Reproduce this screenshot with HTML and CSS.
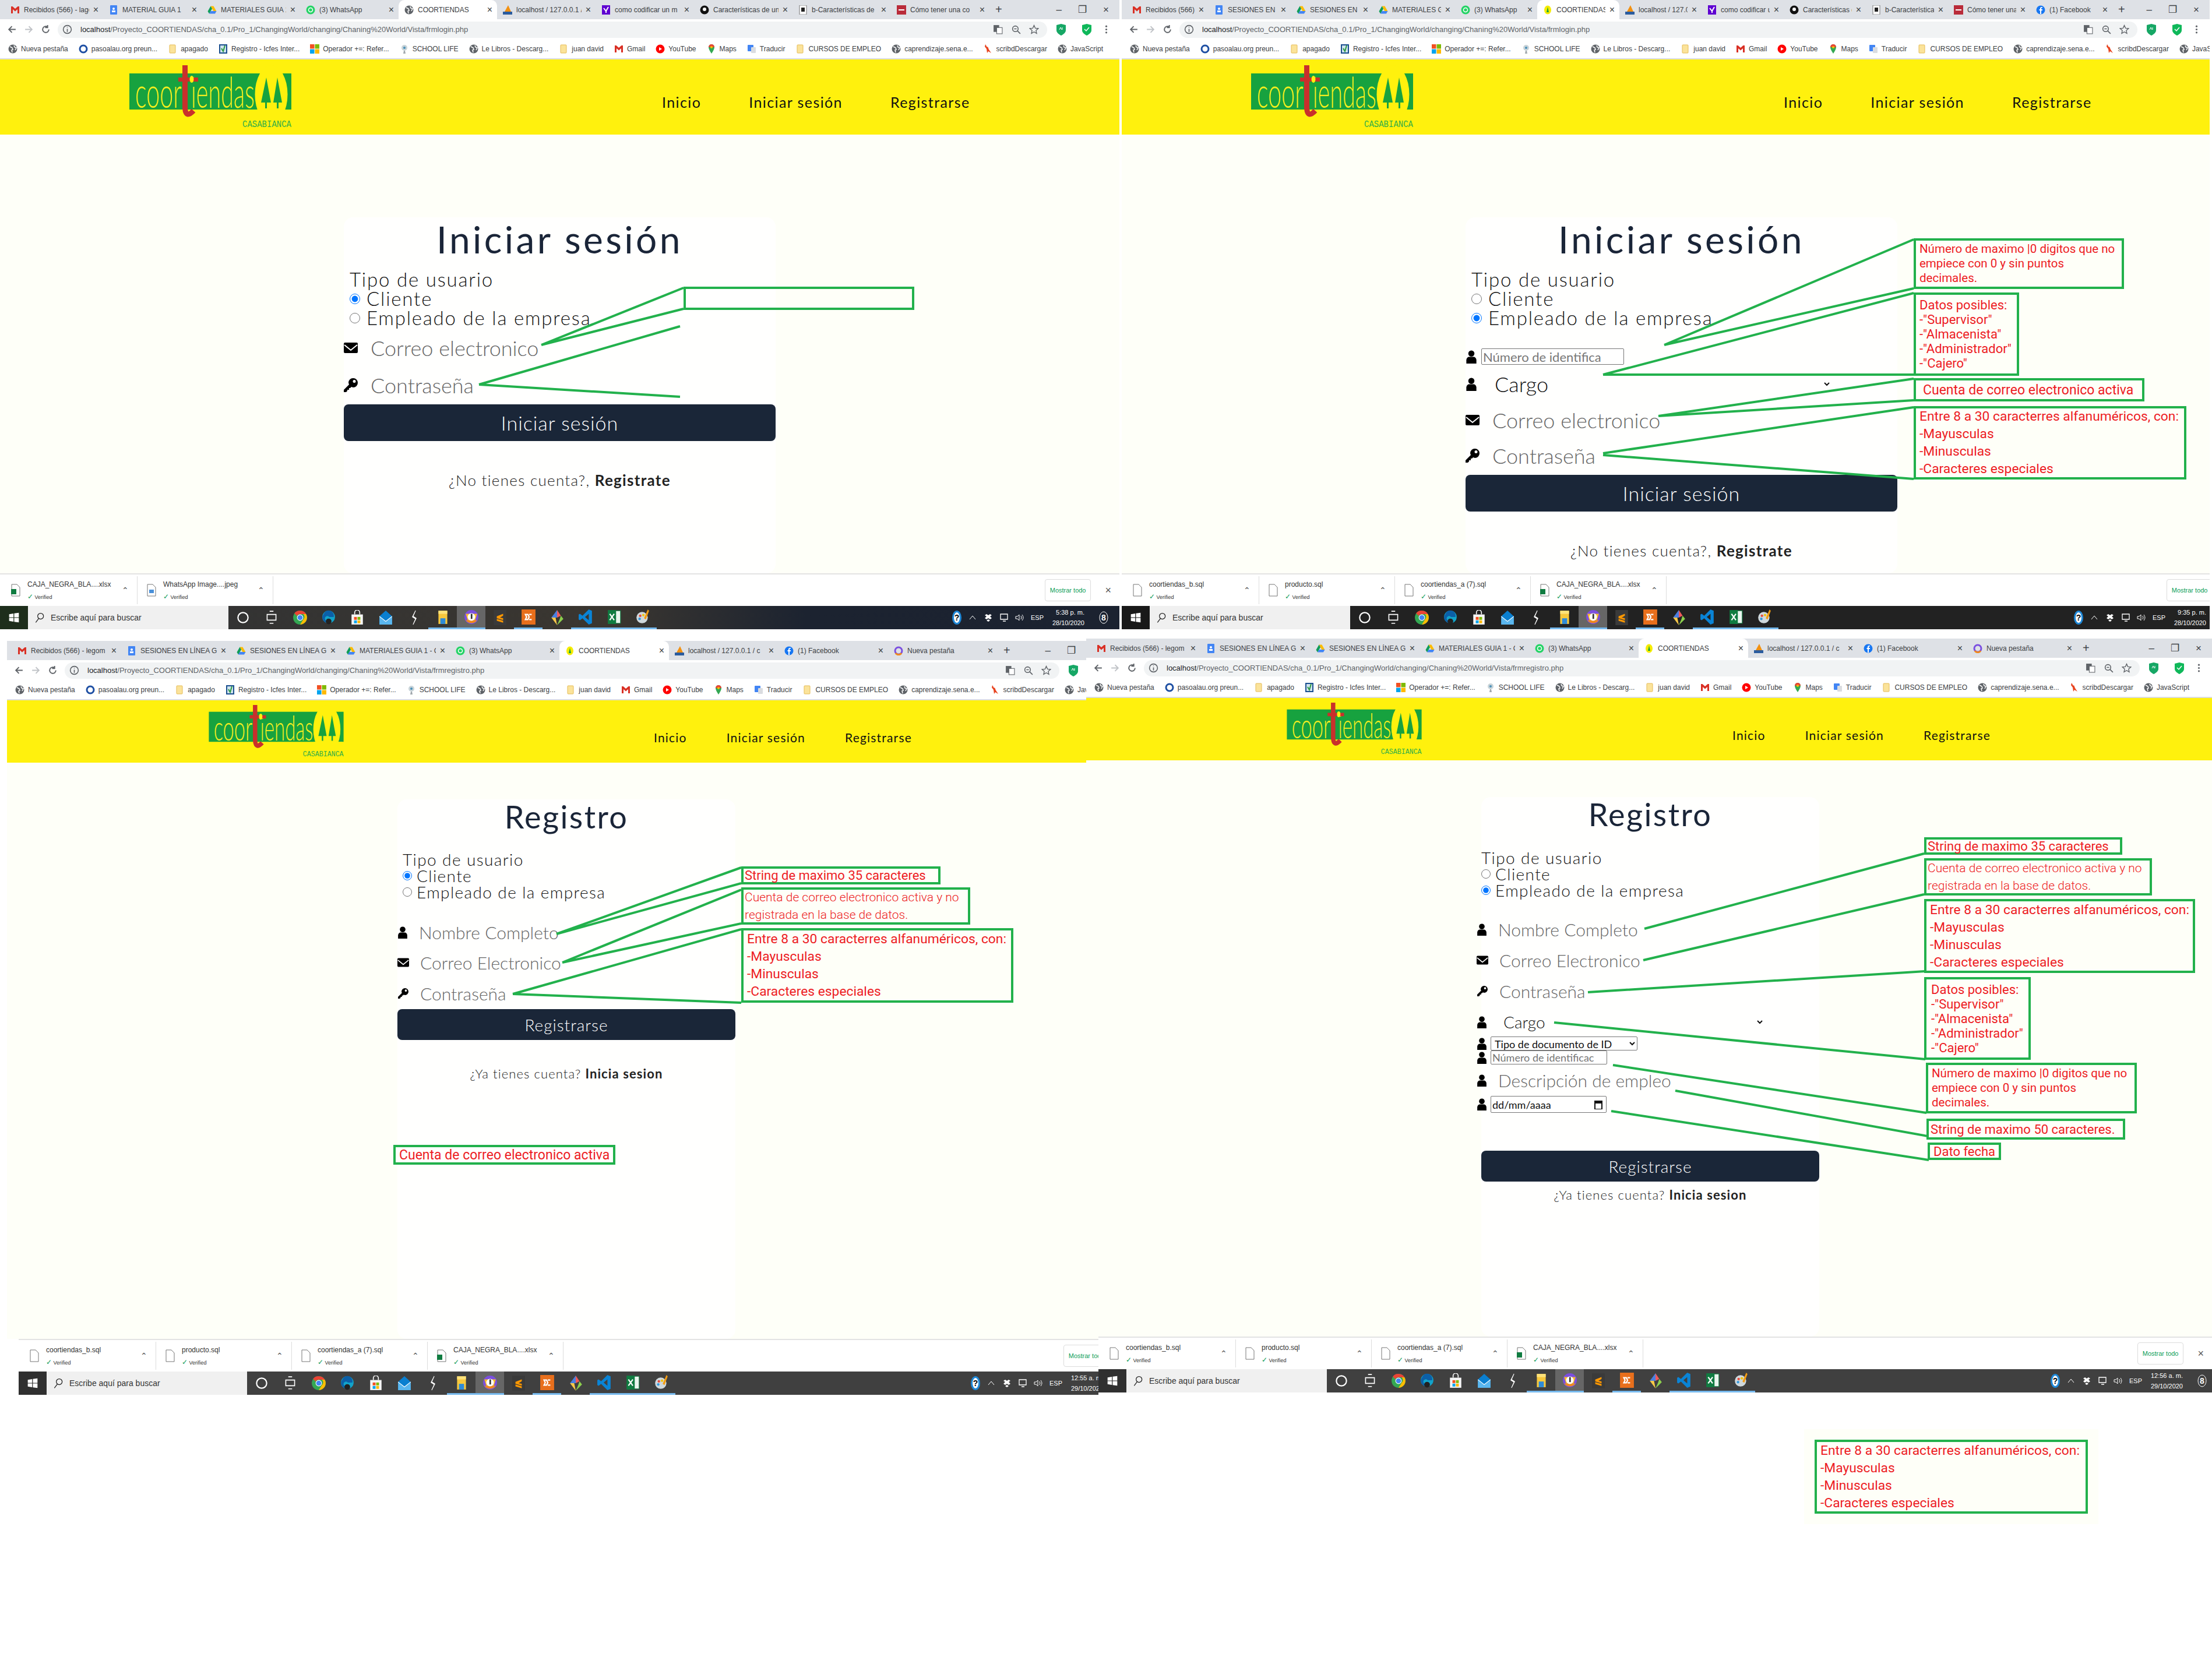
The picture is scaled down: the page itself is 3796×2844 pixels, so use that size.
FILE: index.html
```html
<!DOCTYPE html>
<html lang="es">
<head>
    <meta charset="UTF-8">
    <title>COORTIENDAS - pantallas de login y registro</title>
    <link rel="stylesheet" href="styles.css">
</head>
<body>
<svg class="sprites" xmlns="http://www.w3.org/2000/svg">
    <symbol id="logo" viewBox="0 0 278 107">
        <rect y="14" width="278" height="62" fill="#17a23f"/>
        <ellipse cx="243.5" cy="50" rx="28" ry="50" fill="#fff10d"/>
        <rect x="216" y="76" width="60" height="26" fill="#fff10d"/>
        <path d="M235 21l-9 43h7v10h3V64h7zM254 21l-7 43h6v10h3V64h6z" fill="#17a23f"/>
        <text class="logo-word" x="10" y="73" textLength="80" lengthAdjust="spacingAndGlyphs">coor</text>
        <text class="logo-word" x="106" y="73" textLength="109" lengthAdjust="spacingAndGlyphs">iendas</text>
        <path d="M95.5 0V74Q97 92 110 78" fill="none" stroke="#c9302c" stroke-width="9"/>
        <rect x="84" y="21" width="34" height="7" fill="#c9302c"/>
        <ellipse cx="107" cy="24" rx="3.5" ry="6" fill="#fff10d"/>
        <text class="logo-place" x="194" y="106" textLength="84" lengthAdjust="spacingAndGlyphs">CASABIANCA</text>
    </symbol>

    <symbol id="i-user" viewBox="0 0 20 24"><circle cx="10" cy="6" r="5.5"/><path d="M1 24v-6c0-4 3-6 5-6h8c2 0 5 2 5 6v6z"/></symbol>
    <symbol id="i-mail" viewBox="0 0 24 18"><path d="M2 0h20q2 0 2 2v14q0 2-2 2H2q-2 0-2-2V2q0-2 2-2z"/><path d="M1 4l11 9 11-9" fill="none" stroke="#fff" stroke-width="2"/></symbol>
    <symbol id="i-key" viewBox="0 0 24 24"><path d="M16 0a8 8 0 0 1 0 16l-3-1-2 2h-2v3H6v2l-2 2H0v-4l9-9-1-3a8 8 0 0 1 8-8zm2 3a2.500 2.500 0 1 0 0 5 2.500 2.500 0 0 0 0-5z"/></symbol>
    <symbol id="i-cal" viewBox="0 0 14 16"><path d="M1 2h12v14H1z" fill="none" stroke="#111" stroke-width="2"/><path d="M1 2h12v4H1z" fill="#111"/></symbol>

    <symbol id="f-gmail" viewBox="0 0 16 16"><path d="M1 2h2.500L8 6l4.500-4H15v12h-3V7L8 10.500 4 7v7H1z" fill="#d93025"/></symbol>
    <symbol id="f-docs" viewBox="0 0 16 16"><rect x="2" width="12" height="16" rx="1" fill="#4285f4"/><circle cx="8" cy="6" r="2" fill="#fff"/><rect x="5" y="9" width="6" height="3" fill="#fff"/></symbol>
    <symbol id="f-drive" viewBox="0 0 16 16"><path d="M5.500 1.500h5l5 9h-5z" fill="#fbbc04"/><path d="M5.500 1.500L.5 10.500 3 14.500 8 6z" fill="#0f9d58"/><path d="M3 14.500l2.500-4.500h10L13 14.500z" fill="#4285f4"/></symbol>
    <symbol id="f-wa" viewBox="0 0 16 16"><circle cx="8" cy="8" r="7.500" fill="#25d366"/><circle cx="8" cy="8" r="3.500" fill="none" stroke="#fff" stroke-width="1.500"/></symbol>
    <symbol id="f-globe" viewBox="0 0 16 16"><circle cx="8" cy="8" r="7.500" fill="#5f6368"/><path d="M3 4l4 2 1 3-2 1 1 4M10 2l1 3 3 1-2 4" fill="none" stroke="#fff" stroke-width="1.500"/></symbol>
    <symbol id="f-coor" viewBox="0 0 16 16"><ellipse cx="8" cy="8" rx="6" ry="7.500" fill="#f6ec00"/><path d="M8 3l2 9H6z" fill="#17a23f"/></symbol>
    <symbol id="f-pma" viewBox="0 0 16 16"><path d="M9 0l5 11H3z" fill="#f29111"/><rect y="11" width="16" height="5" fill="#2b5c9e"/></symbol>
    <symbol id="f-yahoo" viewBox="0 0 16 16"><rect x="1" width="14" height="16" fill="#5f01d1"/><path d="M4 5l4 5 4-7M8 10v3" fill="none" stroke="#fff" stroke-width="2"/></symbol>
    <symbol id="f-dark" viewBox="0 0 16 16"><circle cx="8" cy="8" r="7.500" fill="#111"/><circle cx="8" cy="7" r="3" fill="#fff"/></symbol>
    <symbol id="f-paper" viewBox="0 0 16 16"><rect x="2" width="12" height="16" fill="#fff" stroke="#777"/><rect x="5" y="4" width="6" height="7" fill="#222"/></symbol>
    <symbol id="f-red" viewBox="0 0 16 16"><rect width="16" height="16" fill="#b92b3a"/><rect x="3" y="7" width="10" height="2" fill="#fff"/></symbol>
    <symbol id="f-fb" viewBox="0 0 16 16"><circle cx="8" cy="8" r="7.500" fill="#1877f2"/><path d="M9 15V9h2V7H9V5.500Q9 4.500 10 4.500h1V3H9.500Q7 3 7 5.500V7H5.500v2H7v6z" fill="#fff"/></symbol>
    <symbol id="f-new" viewBox="0 0 16 16"><circle cx="8" cy="8" r="6" fill="none" stroke="#7b4fe0" stroke-width="3"/><path d="M3 12a6 6 0 0 0 10 0" fill="none" stroke="#f08a1d" stroke-width="3"/></symbol>
    <symbol id="f-pas" viewBox="0 0 16 16"><circle cx="8" cy="8" r="6" fill="#fff" stroke="#1e4fa3" stroke-width="3"/></symbol>
    <symbol id="f-folder" viewBox="0 0 16 16"><rect x="3" y="1" width="10" height="14" rx="1" fill="#fbe39a" stroke="#e5bb57"/></symbol>
    <symbol id="f-reg" viewBox="0 0 16 16"><rect x="2" y="1" width="12" height="14" fill="#cfe3ee" stroke="#1b4f8f" stroke-width="2"/><path d="M5 7l3 5 3-10" fill="none" stroke="#2c9a43" stroke-width="2"/></symbol>
    <symbol id="f-ms" viewBox="0 0 16 16"><rect width="7.500" height="7.500" fill="#f25022"/><rect x="8.500" width="7.500" height="7.500" fill="#7fba00"/><rect y="8.500" width="7.500" height="7.500" fill="#00a4ef"/><rect x="8.500" y="8.500" width="7.500" height="7.500" fill="#ffb900"/></symbol>
    <symbol id="f-school" viewBox="0 0 16 16"><circle cx="8" cy="6" r="5" fill="#c8d3d8"/><circle cx="8" cy="6" r="2" fill="#4a8fb8"/><path d="M7 11h2l1 5H6z" fill="#a0a8ad"/></symbol>
    <symbol id="f-yt" viewBox="0 0 16 16"><circle cx="8" cy="8" r="7.500" fill="#f00"/><path d="M6 5l5 3-5 3z" fill="#fff"/></symbol>
    <symbol id="f-maps" viewBox="0 0 16 16"><path d="M8 0a5 5 0 0 1 5 5c0 4-5 11-5 11S3 9 3 5a5 5 0 0 1 5-5z" fill="#34a853"/><path d="M8 0a5 5 0 0 1 5 5H3a5 5 0 0 1 5-5z" fill="#ea4335"/><circle cx="8" cy="5" r="2" fill="#fbbc04"/></symbol>
    <symbol id="f-trans" viewBox="0 0 16 16"><rect x="1" y="1" width="10" height="11" rx="1" fill="#4285f4"/><rect x="7" y="5" width="8" height="10" rx="1" fill="#dadce0"/></symbol>
    <symbol id="f-scribd" viewBox="0 0 16 16"><path d="M3 0l3 5 1-1 2 5 4 6-5-3-2 3-1-7-3-4z" fill="#e8431f"/></symbol>

    <symbol id="t-back" viewBox="0 0 16 16"><path d="M14 8H3M8 3L3 8l5 5" fill="none" stroke="#5f6368" stroke-width="1.800"/></symbol>
    <symbol id="t-next" viewBox="0 0 16 16"><path d="M2 8h11M8 3l5 5-5 5" fill="none" stroke="#c0c3c7" stroke-width="1.800"/></symbol>
    <symbol id="t-load" viewBox="0 0 16 16"><path d="M13 8a5 5 0 1 1-2-4M11 1v4H7" fill="none" stroke="#5f6368" stroke-width="1.800"/></symbol>
    <symbol id="t-info" viewBox="0 0 16 16"><circle cx="8" cy="8" r="6.500" fill="none" stroke="#5f6368" stroke-width="1.500"/><path d="M8 4v1M8 7v5" stroke="#5f6368" stroke-width="1.500"/></symbol>
    <symbol id="t-trad" viewBox="0 0 16 16"><rect x="1" y="1" width="9" height="11" fill="#5f6368"/><rect x="6" y="5" width="9" height="10" fill="#fff" stroke="#5f6368"/></symbol>
    <symbol id="t-zoom" viewBox="0 0 16 16"><circle cx="7" cy="7" r="4.500" fill="none" stroke="#5f6368" stroke-width="1.500"/><path d="M10 10l5 5M5 7h4" stroke="#5f6368" stroke-width="1.500"/></symbol>
    <symbol id="t-star" viewBox="0 0 16 16"><path d="M8 1.500l2 4.500 4.800.5-3.600 3.200 1 4.800L8 12l-4.200 2.500 1-4.800L1.200 6.500 6 6z" fill="none" stroke="#5f6368" stroke-width="1.300"/></symbol>
    <symbol id="t-ab" viewBox="0 0 16 20"><path d="M8 0l8 2v9c0 4-4 7-8 9-4-2-8-5-8-9V2z" fill="#16a765"/><path d="M5 10l2-4 2 4M10 6v4" fill="none" stroke="#fff"/></symbol>
    <symbol id="t-shield" viewBox="0 0 16 20"><path d="M8 0l8 2v9c0 4-4 7-8 9-4-2-8-5-8-9V2z" fill="#0fb85a"/><path d="M4 9l3 3 5-6" fill="none" stroke="#fff" stroke-width="1.500"/></symbol>
    <symbol id="t-dots" viewBox="0 0 16 16"><circle cx="8" cy="3" r="1.500" fill="#5f6368"/><circle cx="8" cy="8" r="1.500" fill="#5f6368"/><circle cx="8" cy="13" r="1.500" fill="#5f6368"/></symbol>

    <symbol id="d-doc" viewBox="0 0 16 22"><path d="M1 1h9l5 5v15H1z" fill="#fff" stroke="#777"/></symbol>
    <symbol id="d-xls" viewBox="0 0 16 22"><path d="M1 1h9l5 5v15H1z" fill="#fff" stroke="#777"/><rect y="9" width="9" height="9" fill="#107c41"/></symbol>
    <symbol id="d-img" viewBox="0 0 16 22"><path d="M1 1h9l5 5v15H1z" fill="#fff" stroke="#777"/><rect x="4" y="10" width="8" height="6" fill="#4a90d9"/></symbol>

    <symbol id="b-win" viewBox="0 0 24 24"><path d="M2 5l9-1.500V11.500H2zM12.500 3.300L22 2v9.500h-9.500zM2 12.500h9v8L2 19zM12.500 12.500H22V22l-9.500-1.300z" fill="#fff"/></symbol>
    <symbol id="b-search" viewBox="0 0 24 24"><circle cx="14" cy="9" r="6" fill="none" stroke="#222" stroke-width="1.500"/><path d="M10 14l-6 8" stroke="#222" stroke-width="1.500"/></symbol>
    <symbol id="b-ring" viewBox="0 0 24 24"><circle cx="12" cy="12" r="8" fill="none" stroke="#fff" stroke-width="2"/></symbol>
    <symbol id="b-view" viewBox="0 0 24 24"><path d="M9 2h6M5 7h14v9H5zM9 21h6" fill="none" stroke="#fff" stroke-width="1.500"/></symbol>
    <symbol id="b-chrome" viewBox="0 0 24 24"><circle cx="12" cy="12" r="11" fill="#34a853"/><path d="M12 1a11 11 0 0 1 9.500 5.500H12a5.500 5.500 0 0 0-5 3L3 5a11 11 0 0 1 9-4z" fill="#ea4335"/><path d="M21.500 6.500A11 11 0 0 1 12 23l5-8a5.500 5.500 0 0 0 0-8.500z" fill="#fbbc04"/><circle cx="12" cy="12" r="4.500" fill="#4285f4" stroke="#fff"/></symbol>
    <symbol id="b-edge" viewBox="0 0 24 24"><circle cx="12" cy="11" r="10" fill="#12a3c9"/><path d="M4 7a8 8 0 0 1 16 4h-7a4 4 0 0 0-7 2c0 4 5 8 10 7A10 10 0 0 1 2 12q0-3 2-5z" fill="#0b5fa8"/><circle cx="12" cy="18" r="4.500" fill="#222"/></symbol>
    <symbol id="b-store" viewBox="0 0 24 24"><path d="M3 7h18v16H3z" fill="#f5f5f5"/><path d="M8 7V4a4 4 0 0 1 8 0v3" fill="none" stroke="#fff" stroke-width="1.500"/><rect x="7" y="11" width="4.500" height="4.500" fill="#f25022"/><rect x="12.500" y="11" width="4.500" height="4.500" fill="#7fba00"/><rect x="7" y="16.500" width="4.500" height="4.500" fill="#00a4ef"/><rect x="12.500" y="16.500" width="4.500" height="4.500" fill="#ffb900"/></symbol>
    <symbol id="b-mail" viewBox="0 0 24 24"><path d="M12 1l10 9v13H2V10z" fill="#0a7fd0"/><path d="M2 10l10 8 10-8v13H2z" fill="#5ab6ee"/><path d="M2 10l10 8 10-8" fill="none" stroke="#fff"/></symbol>
    <symbol id="b-bolt" viewBox="0 0 24 24"><path d="M14 1L9 11l5 3-4 9 5-10-5-3z" fill="#fff" stroke="#fff"/></symbol>
    <symbol id="b-folder" viewBox="0 0 24 24"><path d="M5 2h14v21H5z" fill="#f7c83d"/><rect x="5" y="2" width="14" height="5" fill="#fde27a"/><rect x="8" y="14" width="8" height="9" fill="#2e8bd8"/></symbol>
    <symbol id="b-canary" viewBox="0 0 24 24"><circle cx="12" cy="12" r="11" fill="#7b4fe0"/><path d="M3 17a11 11 0 0 0 18 0z" fill="#f08a1d"/><path d="M3 7h18l-3 10H6z" fill="#fbbf24"/><circle cx="12" cy="12" r="6" fill="#fff"/><rect x="11" y="7" width="2.500" height="8" fill="#333"/></symbol>
    <symbol id="b-sublime" viewBox="0 0 24 24"><rect x="2" width="20" height="24" fill="#3a3a3a"/><path d="M17 6L7 10v3l10 3v-3l-5-1 5-3zM7 14v3l10 3v-3z" fill="#ff9800"/></symbol>
    <symbol id="b-xampp" viewBox="0 0 24 24"><rect x="1" width="22" height="24" fill="#e86f1c"/><path d="M7 8h4l2 4-2 4H7l2-4zM17 8h-4M17 16h-4" fill="none" stroke="#fff" stroke-width="2"/></symbol>
    <symbol id="b-git" viewBox="0 0 24 24"><path d="M12 0l6 9-6 3z" fill="#f15a5a"/><path d="M18 9l4 5-10 10 4-9z" fill="#8ccf4d"/><path d="M12 24L3 12l6-3 3 15z" fill="#f7c948"/><path d="M3 12l9-12v12z" fill="#4a7fe0"/></symbol>
    <symbol id="b-code" viewBox="0 0 24 24"><path d="M17 0l5 2v20l-5 2L7 14l-4 3-2-1V8l2-1 4 3zM17 7l-6 5 6 5z" fill="#0a84d6"/></symbol>
    <symbol id="b-excel" viewBox="0 0 24 24"><rect x="9" y="2" width="13" height="20" fill="#eaf5ee" stroke="#107c41"/><rect x="2" y="1" width="13" height="22" fill="#107c41"/><path d="M5 7l7 10M12 7L5 17" stroke="#fff" stroke-width="2"/></symbol>
    <symbol id="b-paint" viewBox="0 0 24 24"><circle cx="11" cy="13" r="9" fill="#cfd8dc"/><circle cx="8" cy="10" r="2" fill="#e74c3c"/><circle cx="13" cy="9" r="2" fill="#f1c40f"/><circle cx="7" cy="15" r="2" fill="#3498db"/><path d="M20 0l-6 14 3 2 5-14z" fill="#f39c12"/></symbol>

    <symbol id="y-help" viewBox="0 0 16 24"><ellipse cx="8" cy="12" rx="8" ry="12" fill="#1e88d8"/><ellipse cx="8" cy="12" rx="5" ry="9" fill="#fff"/><text class="tray-help" x="8" y="17" text-anchor="middle">?</text></symbol>
    <symbol id="y-up" viewBox="0 0 16 16"><path d="M3 11l5-6 5 6" fill="none" stroke="#fff"/></symbol>
    <symbol id="y-box" viewBox="0 0 16 16"><path d="M2 4l3-2 3 2 3-2 3 2-3 2 3 3-3 2-3-2-3 2-3-2 3-3zM5 13l3 2 3-2-3-2z" fill="#fff"/></symbol>
    <symbol id="y-pc" viewBox="0 0 16 16"><path d="M2 2h12v9H2zM6 14h5" fill="none" stroke="#fff" stroke-width="1.300"/></symbol>
    <symbol id="y-vol" viewBox="0 0 16 16"><path d="M1 6h3l3-3v10l-3-3H1zM10 5q2 3 0 6M12 3q4 5 0 10" fill="none" stroke="#fff"/></symbol>
    <symbol id="y-note" viewBox="0 0 16 24"><ellipse cx="8" cy="12" rx="7" ry="10" fill="none" stroke="#fff"/><text class="tray-help" x="8" y="17" text-anchor="middle" fill="#fff">8</text></symbol>
</svg>

<div class="canvas">

    <!-- captura 1: login cliente -->
    <section class="win win-a">
        <div class="chrome">
            <div class="tabs">
                <div class="tab"><svg class="fav"><use href="#f-gmail"/></svg><span class="tab-name">Recibidos (566) - lagomez</span><span class="tab-x">×</span></div>
                <div class="tab"><svg class="fav"><use href="#f-docs"/></svg><span class="tab-name">MATERIAL GUIA 1</span><span class="tab-x">×</span></div>
                <div class="tab"><svg class="fav"><use href="#f-drive"/></svg><span class="tab-name">MATERIALES GUIA 1</span><span class="tab-x">×</span></div>
                <div class="tab"><svg class="fav"><use href="#f-wa"/></svg><span class="tab-name">(3) WhatsApp</span><span class="tab-x">×</span></div>
                <div class="tab tab-on"><svg class="fav"><use href="#f-globe"/></svg><span class="tab-name">COORTIENDAS</span><span class="tab-x">×</span></div>
                <div class="tab"><svg class="fav"><use href="#f-pma"/></svg><span class="tab-name">localhost / 127.0.0.1 / c</span><span class="tab-x">×</span></div>
                <div class="tab"><svg class="fav"><use href="#f-yahoo"/></svg><span class="tab-name">como codificar un m</span><span class="tab-x">×</span></div>
                <div class="tab"><svg class="fav"><use href="#f-dark"/></svg><span class="tab-name">Características de un</span><span class="tab-x">×</span></div>
                <div class="tab"><svg class="fav"><use href="#f-paper"/></svg><span class="tab-name">b-Características de</span><span class="tab-x">×</span></div>
                <div class="tab"><svg class="fav"><use href="#f-red"/></svg><span class="tab-name">Cómo tener una co</span><span class="tab-x">×</span></div>
                <span class="tab-add">+</span>
                <div class="win-btns"><span>–</span><span>❐</span><span>×</span></div>
            </div>
            <div class="tool">
                <svg class="tool-ic"><use href="#t-back"/></svg><svg class="tool-ic"><use href="#t-next"/></svg><svg class="tool-ic"><use href="#t-load"/></svg>
                <div class="omni">
                    <svg class="tool-ic"><use href="#t-info"/></svg>
                    <span class="url"><b>localhost</b>/Proyecto_COORTIENDAS/cha_0.1/Pro_1/ChangingWorld/changing/Chaning%20World/Vista/frmlogin.php</span>
                    <svg class="tool-ic"><use href="#t-trad"/></svg><svg class="tool-ic"><use href="#t-zoom"/></svg><svg class="tool-ic"><use href="#t-star"/></svg>
                </div>
                <svg class="tool-ext"><use href="#t-ab"/></svg><svg class="tool-ext"><use href="#t-shield"/></svg><svg class="tool-ic"><use href="#t-dots"/></svg>
            </div>
            <div class="marks">
                <span class="mark"><svg class="fav"><use href="#f-globe"/></svg>Nueva pestaña</span>
                <span class="mark"><svg class="fav"><use href="#f-pas"/></svg>pasoalau.org preun...</span>
                <span class="mark"><svg class="fav"><use href="#f-folder"/></svg>apagado</span>
                <span class="mark"><svg class="fav"><use href="#f-reg"/></svg>Registro - Icfes Inter...</span>
                <span class="mark"><svg class="fav"><use href="#f-ms"/></svg>Operador +=: Refer...</span>
                <span class="mark"><svg class="fav"><use href="#f-school"/></svg>SCHOOL LIFE</span>
                <span class="mark"><svg class="fav"><use href="#f-globe"/></svg>Le Libros - Descarg...</span>
                <span class="mark"><svg class="fav"><use href="#f-folder"/></svg>juan david</span>
                <span class="mark"><svg class="fav"><use href="#f-gmail"/></svg>Gmail</span>
                <span class="mark"><svg class="fav"><use href="#f-yt"/></svg>YouTube</span>
                <span class="mark"><svg class="fav"><use href="#f-maps"/></svg>Maps</span>
                <span class="mark"><svg class="fav"><use href="#f-trans"/></svg>Traducir</span>
                <span class="mark"><svg class="fav"><use href="#f-folder"/></svg>CURSOS DE EMPLEO</span>
                <span class="mark"><svg class="fav"><use href="#f-globe"/></svg>caprendizaje.sena.e...</span>
                <span class="mark"><svg class="fav"><use href="#f-scribd"/></svg>scribdDescargar</span>
                <span class="mark"><svg class="fav"><use href="#f-globe"/></svg>JavaScript</span>
            </div>
        </div>
        <header class="site">
            <svg class="site-logo"><use href="#logo"/></svg>
            <nav class="site-nav"><a>Inicio</a><a>Iniciar sesión</a><a>Registrarse</a></nav>
        </header>
        <main class="page">
            <form class="form">
                <h1 class="form-title">Iniciar sesión</h1>
                <div class="kind">
                    <p>Tipo de usuario</p>
                    <label><input type="radio" name="ka" checked>Cliente</label>
                    <label><input type="radio" name="ka">Empleado de la empresa</label>
                </div>
                <div class="row row-first"><svg class="ic ic-mail"><use href="#i-mail"/></svg><input class="field" placeholder="Correo electronico"></div>
                <div class="row row-pass"><svg class="ic ic-key"><use href="#i-key"/></svg><input class="field" placeholder="Contraseña"></div>
                <button type="button" class="send">Iniciar sesión</button>
                <p class="alt">¿No tienes cuenta?, <b>Registrate</b></p>
            </form>
        </main>
        <div class="dock">
            <div class="dl">
                <div class="dl-item"><svg class="dl-ic"><use href="#d-xls"/></svg><div class="dl-txt"><span>CAJA_NEGRA_BLA....xlsx</span><small><i>✓</i> Verified</small></div><span class="dl-up">⌃</span></div>
                <div class="dl-item"><svg class="dl-ic"><use href="#d-img"/></svg><div class="dl-txt"><span>WhatsApp Image....jpeg</span><small><i>✓</i> Verified</small></div><span class="dl-up">⌃</span></div>
                <span class="dl-all">Mostrar todo</span><span class="dl-x">×</span>
            </div>
            <div class="bar bar-a">
                <span class="start"><svg class="bar-win"><use href="#b-win"/></svg></span>
                <div class="find"><svg class="find-ic"><use href="#b-search"/></svg>Escribe aquí para buscar</div>
                <span class="app"><svg><use href="#b-ring"/></svg></span>
                <span class="app"><svg><use href="#b-view"/></svg></span>
                <span class="app"><svg><use href="#b-chrome"/></svg></span>
                <span class="app"><svg><use href="#b-edge"/></svg></span>
                <span class="app"><svg><use href="#b-store"/></svg></span>
                <span class="app"><svg><use href="#b-mail"/></svg></span>
                <span class="app"><svg><use href="#b-bolt"/></svg></span>
                <span class="app app-run"><svg><use href="#b-folder"/></svg></span>
                <span class="app app-run app-cur"><svg><use href="#b-canary"/></svg></span>
                <span class="app"><svg><use href="#b-sublime"/></svg></span>
                <span class="app app-run"><svg><use href="#b-xampp"/></svg></span>
                <span class="app"><svg><use href="#b-git"/></svg></span>
                <span class="app app-run"><svg><use href="#b-code"/></svg></span>
                <span class="app app-run"><svg><use href="#b-excel"/></svg></span>
                <span class="app app-run"><svg><use href="#b-paint"/></svg></span>
                <div class="tray">
                    <svg class="tray-tall"><use href="#y-help"/></svg><svg class="tray-ic"><use href="#y-up"/></svg><svg class="tray-ic"><use href="#y-box"/></svg><svg class="tray-ic"><use href="#y-pc"/></svg><svg class="tray-ic"><use href="#y-vol"/></svg>
                    <span class="tray-lang">ESP</span>
                    <span class="clock">5:38 p. m.<br>28/10/2020</span>
                    <svg class="tray-tall"><use href="#y-note"/></svg>
                </div>
            </div>
        </div>
    </section>

    <!-- captura 2: login empleado -->
    <section class="win win-b">
        <div class="chrome">
            <div class="tabs">
                <div class="tab"><svg class="fav"><use href="#f-gmail"/></svg><span class="tab-name">Recibidos (566) - lago</span><span class="tab-x">×</span></div>
                <div class="tab"><svg class="fav"><use href="#f-docs"/></svg><span class="tab-name">SESIONES EN LÍNEA</span><span class="tab-x">×</span></div>
                <div class="tab"><svg class="fav"><use href="#f-drive"/></svg><span class="tab-name">SESIONES EN LÍNEA</span><span class="tab-x">×</span></div>
                <div class="tab"><svg class="fav"><use href="#f-drive"/></svg><span class="tab-name">MATERIALES GUIA</span><span class="tab-x">×</span></div>
                <div class="tab"><svg class="fav"><use href="#f-wa"/></svg><span class="tab-name">(3) WhatsApp</span><span class="tab-x">×</span></div>
                <div class="tab tab-on"><svg class="fav"><use href="#f-coor"/></svg><span class="tab-name">COORTIENDAS</span><span class="tab-x">×</span></div>
                <div class="tab"><svg class="fav"><use href="#f-pma"/></svg><span class="tab-name">localhost / 127.0.0.1</span><span class="tab-x">×</span></div>
                <div class="tab"><svg class="fav"><use href="#f-yahoo"/></svg><span class="tab-name">como codificar u</span><span class="tab-x">×</span></div>
                <div class="tab"><svg class="fav"><use href="#f-dark"/></svg><span class="tab-name">Características d</span><span class="tab-x">×</span></div>
                <div class="tab"><svg class="fav"><use href="#f-paper"/></svg><span class="tab-name">b-Características</span><span class="tab-x">×</span></div>
                <div class="tab"><svg class="fav"><use href="#f-red"/></svg><span class="tab-name">Cómo tener una</span><span class="tab-x">×</span></div>
                <div class="tab"><svg class="fav"><use href="#f-fb"/></svg><span class="tab-name">(1) Facebook</span><span class="tab-x">×</span></div>
                <span class="tab-add">+</span>
                <div class="win-btns"><span>–</span><span>❐</span><span>×</span></div>
            </div>
            <div class="tool">
                <svg class="tool-ic"><use href="#t-back"/></svg><svg class="tool-ic"><use href="#t-next"/></svg><svg class="tool-ic"><use href="#t-load"/></svg>
                <div class="omni">
                    <svg class="tool-ic"><use href="#t-info"/></svg>
                    <span class="url"><b>localhost</b>/Proyecto_COORTIENDAS/cha_0.1/Pro_1/ChangingWorld/changing/Chaning%20World/Vista/frmlogin.php</span>
                    <svg class="tool-ic"><use href="#t-trad"/></svg><svg class="tool-ic"><use href="#t-zoom"/></svg><svg class="tool-ic"><use href="#t-star"/></svg>
                </div>
                <svg class="tool-ext"><use href="#t-ab"/></svg><svg class="tool-ext"><use href="#t-shield"/></svg><svg class="tool-ic"><use href="#t-dots"/></svg>
            </div>
            <div class="marks">
                <span class="mark"><svg class="fav"><use href="#f-globe"/></svg>Nueva pestaña</span>
                <span class="mark"><svg class="fav"><use href="#f-pas"/></svg>pasoalau.org preun...</span>
                <span class="mark"><svg class="fav"><use href="#f-folder"/></svg>apagado</span>
                <span class="mark"><svg class="fav"><use href="#f-reg"/></svg>Registro - Icfes Inter...</span>
                <span class="mark"><svg class="fav"><use href="#f-ms"/></svg>Operador +=: Refer...</span>
                <span class="mark"><svg class="fav"><use href="#f-school"/></svg>SCHOOL LIFE</span>
                <span class="mark"><svg class="fav"><use href="#f-globe"/></svg>Le Libros - Descarg...</span>
                <span class="mark"><svg class="fav"><use href="#f-folder"/></svg>juan david</span>
                <span class="mark"><svg class="fav"><use href="#f-gmail"/></svg>Gmail</span>
                <span class="mark"><svg class="fav"><use href="#f-yt"/></svg>YouTube</span>
                <span class="mark"><svg class="fav"><use href="#f-maps"/></svg>Maps</span>
                <span class="mark"><svg class="fav"><use href="#f-trans"/></svg>Traducir</span>
                <span class="mark"><svg class="fav"><use href="#f-folder"/></svg>CURSOS DE EMPLEO</span>
                <span class="mark"><svg class="fav"><use href="#f-globe"/></svg>caprendizaje.sena.e...</span>
                <span class="mark"><svg class="fav"><use href="#f-scribd"/></svg>scribdDescargar</span>
                <span class="mark"><svg class="fav"><use href="#f-globe"/></svg>JavaScript</span>
            </div>
        </div>
        <header class="site">
            <svg class="site-logo"><use href="#logo"/></svg>
            <nav class="site-nav"><a>Inicio</a><a>Iniciar sesión</a><a>Registrarse</a></nav>
        </header>
        <main class="page">
            <form class="form">
                <h1 class="form-title">Iniciar sesión</h1>
                <div class="kind">
                    <p>Tipo de usuario</p>
                    <label><input type="radio" name="kb">Cliente</label>
                    <label><input type="radio" name="kb" checked>Empleado de la empresa</label>
                </div>
                <div class="row row-id"><svg class="ic ic-user"><use href="#i-user"/></svg><input class="box-input box-id" placeholder="Número de identifica"></div>
                <div class="row row-cargo"><svg class="ic ic-user"><use href="#i-user"/></svg><select class="pick"><option>Cargo</option></select></div>
                <div class="row row-mail"><svg class="ic ic-mail"><use href="#i-mail"/></svg><input class="field" placeholder="Correo electronico"></div>
                <div class="row row-pass2"><svg class="ic ic-key"><use href="#i-key"/></svg><input class="field" placeholder="Contraseña"></div>
                <button type="button" class="send">Iniciar sesión</button>
                <p class="alt">¿No tienes cuenta?, <b>Registrate</b></p>
            </form>
        </main>
        <div class="dock">
            <div class="dl">
                <div class="dl-item"><svg class="dl-ic"><use href="#d-doc"/></svg><div class="dl-txt"><span>coortiendas_b.sql</span><small><i>✓</i> Verified</small></div><span class="dl-up">⌃</span></div>
                <div class="dl-item"><svg class="dl-ic"><use href="#d-doc"/></svg><div class="dl-txt"><span>producto.sql</span><small><i>✓</i> Verified</small></div><span class="dl-up">⌃</span></div>
                <div class="dl-item"><svg class="dl-ic"><use href="#d-doc"/></svg><div class="dl-txt"><span>coortiendas_a (7).sql</span><small><i>✓</i> Verified</small></div><span class="dl-up">⌃</span></div>
                <div class="dl-item"><svg class="dl-ic"><use href="#d-xls"/></svg><div class="dl-txt"><span>CAJA_NEGRA_BLA....xlsx</span><small><i>✓</i> Verified</small></div><span class="dl-up">⌃</span></div>
                <span class="dl-all">Mostrar todo</span><span class="dl-x">×</span>
            </div>
            <div class="bar bar-b">
                <span class="start"><svg class="bar-win"><use href="#b-win"/></svg></span>
                <div class="find"><svg class="find-ic"><use href="#b-search"/></svg>Escribe aquí para buscar</div>
                <span class="app"><svg><use href="#b-ring"/></svg></span>
                <span class="app"><svg><use href="#b-view"/></svg></span>
                <span class="app"><svg><use href="#b-chrome"/></svg></span>
                <span class="app"><svg><use href="#b-edge"/></svg></span>
                <span class="app"><svg><use href="#b-store"/></svg></span>
                <span class="app"><svg><use href="#b-mail"/></svg></span>
                <span class="app"><svg><use href="#b-bolt"/></svg></span>
                <span class="app app-run"><svg><use href="#b-folder"/></svg></span>
                <span class="app app-run app-cur"><svg><use href="#b-canary"/></svg></span>
                <span class="app"><svg><use href="#b-sublime"/></svg></span>
                <span class="app app-run"><svg><use href="#b-xampp"/></svg></span>
                <span class="app"><svg><use href="#b-git"/></svg></span>
                <span class="app app-run"><svg><use href="#b-code"/></svg></span>
                <span class="app app-run"><svg><use href="#b-excel"/></svg></span>
                <span class="app app-run"><svg><use href="#b-paint"/></svg></span>
                <div class="tray">
                    <svg class="tray-tall"><use href="#y-help"/></svg><svg class="tray-ic"><use href="#y-up"/></svg><svg class="tray-ic"><use href="#y-box"/></svg><svg class="tray-ic"><use href="#y-pc"/></svg><svg class="tray-ic"><use href="#y-vol"/></svg>
                    <span class="tray-lang">ESP</span>
                    <span class="clock">9:35 p. m.<br>28/10/2020</span>
                    <svg class="tray-tall"><use href="#y-note"/></svg>
                </div>
            </div>
        </div>
    </section>

    <!-- captura 3: registro cliente -->
    <section class="win win-c">
        <div class="chrome">
            <div class="tabs">
                <div class="tab"><svg class="fav"><use href="#f-gmail"/></svg><span class="tab-name">Recibidos (566) - legom</span><span class="tab-x">×</span></div>
                <div class="tab"><svg class="fav"><use href="#f-docs"/></svg><span class="tab-name">SESIONES EN LÍNEA GU</span><span class="tab-x">×</span></div>
                <div class="tab"><svg class="fav"><use href="#f-drive"/></svg><span class="tab-name">SESIONES EN LÍNEA G...</span><span class="tab-x">×</span></div>
                <div class="tab"><svg class="fav"><use href="#f-drive"/></svg><span class="tab-name">MATERIALES GUIA 1 - G</span><span class="tab-x">×</span></div>
                <div class="tab"><svg class="fav"><use href="#f-wa"/></svg><span class="tab-name">(3) WhatsApp</span><span class="tab-x">×</span></div>
                <div class="tab tab-on"><svg class="fav"><use href="#f-coor"/></svg><span class="tab-name">COORTIENDAS</span><span class="tab-x">×</span></div>
                <div class="tab"><svg class="fav"><use href="#f-pma"/></svg><span class="tab-name">localhost / 127.0.0.1 / c</span><span class="tab-x">×</span></div>
                <div class="tab"><svg class="fav"><use href="#f-fb"/></svg><span class="tab-name">(1) Facebook</span><span class="tab-x">×</span></div>
                <div class="tab"><svg class="fav"><use href="#f-new"/></svg><span class="tab-name">Nueva pestaña</span><span class="tab-x">×</span></div>
                <span class="tab-add">+</span>
                <div class="win-btns"><span>–</span><span>❐</span></div>
            </div>
            <div class="tool">
                <svg class="tool-ic"><use href="#t-back"/></svg><svg class="tool-ic"><use href="#t-next"/></svg><svg class="tool-ic"><use href="#t-load"/></svg>
                <div class="omni">
                    <svg class="tool-ic"><use href="#t-info"/></svg>
                    <span class="url"><b>localhost</b>/Proyecto_COORTIENDAS/cha_0.1/Pro_1/ChangingWorld/changing/Chaning%20World/Vista/frmregistro.php</span>
                    <svg class="tool-ic"><use href="#t-trad"/></svg><svg class="tool-ic"><use href="#t-zoom"/></svg><svg class="tool-ic"><use href="#t-star"/></svg>
                </div>
                <svg class="tool-ext"><use href="#t-ab"/></svg>
            </div>
            <div class="marks">
                <span class="mark"><svg class="fav"><use href="#f-globe"/></svg>Nueva pestaña</span>
                <span class="mark"><svg class="fav"><use href="#f-pas"/></svg>pasoalau.org preun...</span>
                <span class="mark"><svg class="fav"><use href="#f-folder"/></svg>apagado</span>
                <span class="mark"><svg class="fav"><use href="#f-reg"/></svg>Registro - Icfes Inter...</span>
                <span class="mark"><svg class="fav"><use href="#f-ms"/></svg>Operador +=: Refer...</span>
                <span class="mark"><svg class="fav"><use href="#f-school"/></svg>SCHOOL LIFE</span>
                <span class="mark"><svg class="fav"><use href="#f-globe"/></svg>Le Libros - Descarg...</span>
                <span class="mark"><svg class="fav"><use href="#f-folder"/></svg>juan david</span>
                <span class="mark"><svg class="fav"><use href="#f-gmail"/></svg>Gmail</span>
                <span class="mark"><svg class="fav"><use href="#f-yt"/></svg>YouTube</span>
                <span class="mark"><svg class="fav"><use href="#f-maps"/></svg>Maps</span>
                <span class="mark"><svg class="fav"><use href="#f-trans"/></svg>Traducir</span>
                <span class="mark"><svg class="fav"><use href="#f-folder"/></svg>CURSOS DE EMPLEO</span>
                <span class="mark"><svg class="fav"><use href="#f-globe"/></svg>caprendizaje.sena.e...</span>
                <span class="mark"><svg class="fav"><use href="#f-scribd"/></svg>scribdDescargar</span>
                <span class="mark"><svg class="fav"><use href="#f-globe"/></svg>JavaScript</span>
            </div>
        </div>
        <header class="site site-small">
            <svg class="site-logo"><use href="#logo"/></svg>
            <nav class="site-nav"><a>Inicio</a><a>Iniciar sesión</a><a>Registrarse</a></nav>
        </header>
        <main class="page page-small">
            <form class="form">
                <h1 class="form-title">Registro</h1>
                <div class="kind">
                    <p>Tipo de usuario</p>
                    <label><input type="radio" name="kc" checked>Cliente</label>
                    <label><input type="radio" name="kc">Empleado de la empresa</label>
                </div>
                <div class="row row-name"><svg class="ic ic-user"><use href="#i-user"/></svg><input class="field" placeholder="Nombre Completo"></div>
                <div class="row row-mail"><svg class="ic ic-mail"><use href="#i-mail"/></svg><input class="field" placeholder="Correo Electronico"></div>
                <div class="row row-pass2"><svg class="ic ic-key"><use href="#i-key"/></svg><input class="field" placeholder="Contraseña"></div>
                <button type="button" class="send">Registrarse</button>
                <p class="alt">¿Ya tienes cuenta? <b>Inicia sesion</b></p>
            </form>
        </main>
        <div class="dock">
            <div class="dl">
                <div class="dl-item"><svg class="dl-ic"><use href="#d-doc"/></svg><div class="dl-txt"><span>coortiendas_b.sql</span><small><i>✓</i> Verified</small></div><span class="dl-up">⌃</span></div>
                <div class="dl-item"><svg class="dl-ic"><use href="#d-doc"/></svg><div class="dl-txt"><span>producto.sql</span><small><i>✓</i> Verified</small></div><span class="dl-up">⌃</span></div>
                <div class="dl-item"><svg class="dl-ic"><use href="#d-doc"/></svg><div class="dl-txt"><span>coortiendas_a (7).sql</span><small><i>✓</i> Verified</small></div><span class="dl-up">⌃</span></div>
                <div class="dl-item"><svg class="dl-ic"><use href="#d-xls"/></svg><div class="dl-txt"><span>CAJA_NEGRA_BLA....xlsx</span><small><i>✓</i> Verified</small></div><span class="dl-up">⌃</span></div>
                <span class="dl-all">Mostrar todo</span><span class="dl-x">×</span>
            </div>
            <div class="bar bar-c">
                <span class="start"><svg class="bar-win"><use href="#b-win"/></svg></span>
                <div class="find"><svg class="find-ic"><use href="#b-search"/></svg>Escribe aquí para buscar</div>
                <span class="app"><svg><use href="#b-ring"/></svg></span>
                <span class="app"><svg><use href="#b-view"/></svg></span>
                <span class="app"><svg><use href="#b-chrome"/></svg></span>
                <span class="app"><svg><use href="#b-edge"/></svg></span>
                <span class="app"><svg><use href="#b-store"/></svg></span>
                <span class="app"><svg><use href="#b-mail"/></svg></span>
                <span class="app"><svg><use href="#b-bolt"/></svg></span>
                <span class="app app-run"><svg><use href="#b-folder"/></svg></span>
                <span class="app app-run app-cur"><svg><use href="#b-canary"/></svg></span>
                <span class="app"><svg><use href="#b-sublime"/></svg></span>
                <span class="app app-run"><svg><use href="#b-xampp"/></svg></span>
                <span class="app"><svg><use href="#b-git"/></svg></span>
                <span class="app app-run"><svg><use href="#b-code"/></svg></span>
                <span class="app app-run"><svg><use href="#b-excel"/></svg></span>
                <span class="app app-run"><svg><use href="#b-paint"/></svg></span>
                <div class="tray">
                    <svg class="tray-tall"><use href="#y-help"/></svg><svg class="tray-ic"><use href="#y-up"/></svg><svg class="tray-ic"><use href="#y-box"/></svg><svg class="tray-ic"><use href="#y-pc"/></svg><svg class="tray-ic"><use href="#y-vol"/></svg>
                    <span class="tray-lang">ESP</span>
                    <span class="clock">12:55 a. m.<br>29/10/2020</span>
                    <svg class="tray-tall"><use href="#y-note"/></svg>
                </div>
            </div>
        </div>
    </section>

    <!-- captura 4: registro empleado -->
    <section class="win win-d">
        <div class="chrome">
            <div class="tabs">
                <div class="tab"><svg class="fav"><use href="#f-gmail"/></svg><span class="tab-name">Recibidos (566) - legom</span><span class="tab-x">×</span></div>
                <div class="tab"><svg class="fav"><use href="#f-docs"/></svg><span class="tab-name">SESIONES EN LÍNEA GU</span><span class="tab-x">×</span></div>
                <div class="tab"><svg class="fav"><use href="#f-drive"/></svg><span class="tab-name">SESIONES EN LÍNEA G...</span><span class="tab-x">×</span></div>
                <div class="tab"><svg class="fav"><use href="#f-drive"/></svg><span class="tab-name">MATERIALES GUIA 1 - G</span><span class="tab-x">×</span></div>
                <div class="tab"><svg class="fav"><use href="#f-wa"/></svg><span class="tab-name">(3) WhatsApp</span><span class="tab-x">×</span></div>
                <div class="tab tab-on"><svg class="fav"><use href="#f-coor"/></svg><span class="tab-name">COORTIENDAS</span><span class="tab-x">×</span></div>
                <div class="tab"><svg class="fav"><use href="#f-pma"/></svg><span class="tab-name">localhost / 127.0.0.1 / c</span><span class="tab-x">×</span></div>
                <div class="tab"><svg class="fav"><use href="#f-fb"/></svg><span class="tab-name">(1) Facebook</span><span class="tab-x">×</span></div>
                <div class="tab"><svg class="fav"><use href="#f-new"/></svg><span class="tab-name">Nueva pestaña</span><span class="tab-x">×</span></div>
                <span class="tab-add">+</span>
                <div class="win-btns"><span>–</span><span>❐</span><span>×</span></div>
            </div>
            <div class="tool">
                <svg class="tool-ic"><use href="#t-back"/></svg><svg class="tool-ic"><use href="#t-next"/></svg><svg class="tool-ic"><use href="#t-load"/></svg>
                <div class="omni">
                    <svg class="tool-ic"><use href="#t-info"/></svg>
                    <span class="url"><b>localhost</b>/Proyecto_COORTIENDAS/cha_0.1/Pro_1/ChangingWorld/changing/Chaning%20World/Vista/frmregistro.php</span>
                    <svg class="tool-ic"><use href="#t-trad"/></svg><svg class="tool-ic"><use href="#t-zoom"/></svg><svg class="tool-ic"><use href="#t-star"/></svg>
                </div>
                <svg class="tool-ext"><use href="#t-ab"/></svg><svg class="tool-ext"><use href="#t-shield"/></svg><svg class="tool-ic"><use href="#t-dots"/></svg>
            </div>
            <div class="marks">
                <span class="mark"><svg class="fav"><use href="#f-globe"/></svg>Nueva pestaña</span>
                <span class="mark"><svg class="fav"><use href="#f-pas"/></svg>pasoalau.org preun...</span>
                <span class="mark"><svg class="fav"><use href="#f-folder"/></svg>apagado</span>
                <span class="mark"><svg class="fav"><use href="#f-reg"/></svg>Registro - Icfes Inter...</span>
                <span class="mark"><svg class="fav"><use href="#f-ms"/></svg>Operador +=: Refer...</span>
                <span class="mark"><svg class="fav"><use href="#f-school"/></svg>SCHOOL LIFE</span>
                <span class="mark"><svg class="fav"><use href="#f-globe"/></svg>Le Libros - Descarg...</span>
                <span class="mark"><svg class="fav"><use href="#f-folder"/></svg>juan david</span>
                <span class="mark"><svg class="fav"><use href="#f-gmail"/></svg>Gmail</span>
                <span class="mark"><svg class="fav"><use href="#f-yt"/></svg>YouTube</span>
                <span class="mark"><svg class="fav"><use href="#f-maps"/></svg>Maps</span>
                <span class="mark"><svg class="fav"><use href="#f-trans"/></svg>Traducir</span>
                <span class="mark"><svg class="fav"><use href="#f-folder"/></svg>CURSOS DE EMPLEO</span>
                <span class="mark"><svg class="fav"><use href="#f-globe"/></svg>caprendizaje.sena.e...</span>
                <span class="mark"><svg class="fav"><use href="#f-scribd"/></svg>scribdDescargar</span>
                <span class="mark"><svg class="fav"><use href="#f-globe"/></svg>JavaScript</span>
            </div>
        </div>
        <header class="site site-small">
            <svg class="site-logo"><use href="#logo"/></svg>
            <nav class="site-nav"><a>Inicio</a><a>Iniciar sesión</a><a>Registrarse</a></nav>
        </header>
        <main class="page page-small">
            <form class="form">
                <h1 class="form-title">Registro</h1>
                <div class="kind">
                    <p>Tipo de usuario</p>
                    <label><input type="radio" name="kd">Cliente</label>
                    <label><input type="radio" name="kd" checked>Empleado de la empresa</label>
                </div>
                <div class="row row-name"><svg class="ic ic-user"><use href="#i-user"/></svg><input class="field" placeholder="Nombre Completo"></div>
                <div class="row row-mail"><svg class="ic ic-mail"><use href="#i-mail"/></svg><input class="field" placeholder="Correo Electronico"></div>
                <div class="row row-pass2"><svg class="ic ic-key"><use href="#i-key"/></svg><input class="field" placeholder="Contraseña"></div>
                <div class="row row-pass2"><svg class="ic ic-user"><use href="#i-user"/></svg><select class="pick"><option>Cargo</option></select></div>
                <div class="row row-doc"><svg class="ic ic-user"><use href="#i-user"/></svg><select class="box-input box-doc"><option>Tipo de documento de ID</option></select></div>
                <div class="row row-num"><svg class="ic ic-user"><use href="#i-user"/></svg><input class="box-input box-num" placeholder="Número de identificac"></div>
                <div class="row row-desc"><svg class="ic ic-user"><use href="#i-user"/></svg><input class="field" placeholder="Descripción de empleo"></div>
                <div class="row row-date"><svg class="ic ic-user"><use href="#i-user"/></svg><span class="box-input box-date">dd/mm/aaaa<svg class="cal"><use href="#i-cal"/></svg></span></div>
                <button type="button" class="send send-far">Registrarse</button>
                <p class="alt alt-near">¿Ya tienes cuenta? <b>Inicia sesion</b></p>
            </form>
        </main>
        <div class="dock">
            <div class="dl">
                <div class="dl-item"><svg class="dl-ic"><use href="#d-doc"/></svg><div class="dl-txt"><span>coortiendas_b.sql</span><small><i>✓</i> Verified</small></div><span class="dl-up">⌃</span></div>
                <div class="dl-item"><svg class="dl-ic"><use href="#d-doc"/></svg><div class="dl-txt"><span>producto.sql</span><small><i>✓</i> Verified</small></div><span class="dl-up">⌃</span></div>
                <div class="dl-item"><svg class="dl-ic"><use href="#d-doc"/></svg><div class="dl-txt"><span>coortiendas_a (7).sql</span><small><i>✓</i> Verified</small></div><span class="dl-up">⌃</span></div>
                <div class="dl-item"><svg class="dl-ic"><use href="#d-xls"/></svg><div class="dl-txt"><span>CAJA_NEGRA_BLA....xlsx</span><small><i>✓</i> Verified</small></div><span class="dl-up">⌃</span></div>
                <span class="dl-all">Mostrar todo</span><span class="dl-x">×</span>
            </div>
            <div class="bar bar-c">
                <span class="start"><svg class="bar-win"><use href="#b-win"/></svg></span>
                <div class="find"><svg class="find-ic"><use href="#b-search"/></svg>Escribe aquí para buscar</div>
                <span class="app"><svg><use href="#b-ring"/></svg></span>
                <span class="app"><svg><use href="#b-view"/></svg></span>
                <span class="app"><svg><use href="#b-chrome"/></svg></span>
                <span class="app"><svg><use href="#b-edge"/></svg></span>
                <span class="app"><svg><use href="#b-store"/></svg></span>
                <span class="app"><svg><use href="#b-mail"/></svg></span>
                <span class="app"><svg><use href="#b-bolt"/></svg></span>
                <span class="app app-run"><svg><use href="#b-folder"/></svg></span>
                <span class="app app-run app-cur"><svg><use href="#b-canary"/></svg></span>
                <span class="app"><svg><use href="#b-sublime"/></svg></span>
                <span class="app app-run"><svg><use href="#b-xampp"/></svg></span>
                <span class="app"><svg><use href="#b-git"/></svg></span>
                <span class="app app-run"><svg><use href="#b-code"/></svg></span>
                <span class="app app-run"><svg><use href="#b-excel"/></svg></span>
                <span class="app app-run"><svg><use href="#b-paint"/></svg></span>
                <div class="tray">
                    <svg class="tray-tall"><use href="#y-help"/></svg><svg class="tray-ic"><use href="#y-up"/></svg><svg class="tray-ic"><use href="#y-box"/></svg><svg class="tray-ic"><use href="#y-pc"/></svg><svg class="tray-ic"><use href="#y-vol"/></svg>
                    <span class="tray-lang">ESP</span>
                    <span class="clock">12:56 a. m.<br>29/10/2020</span>
                    <svg class="tray-tall"><use href="#y-note"/></svg>
                </div>
            </div>
        </div>
    </section>

    <!-- anotaciones en verde y rojo encima de las capturas -->
    <svg class="pointers" viewBox="0 0 3796 2844">
        <path d="M929 592L1173 494M929 592L1173 530M822 660L1167 560M822 660L1167 681"/>
        <path d="M2856 592L3284 411M2856 592L3284 495M2751 643L3284 503M2751 643H3284M2846 714L3284 650M2846 714L3284 687M2751 778L3284 699M2751 781L3284 822"/>
        <path d="M955 1603L1272 1489M955 1603L1272 1516M965 1652L1272 1527M965 1652L1272 1585M880 1706L1272 1595M880 1706L1272 1721"/>
        <path d="M2822 1594L3302 1465M2820 1648L3302 1535M2725 1703L3304 1667M2667 1755L3304 1818M2768 1828L3306 1910M2875 1872L3308 1950M2765 1907L3310 1991"/>
        <path d="M3106 2474H3116M3106 2596H3116"/>
    </svg>

    <div class="note n-empty"></div>

    <div class="note note-num n-b1"><span>Número de maximo |0 digitos que no</span><span>empiece con 0 y sin puntos</span><span>decimales.</span></div>
    <div class="note n-b2"><span>Datos posibles:</span><span>-"Supervisor"</span><span>-"Almacenista"</span><span>-"Administrador"</span><span>-"Cajero"</span></div>
    <div class="note note-wide n-b3"><span>Cuenta de correo electronico activa</span></div>
    <div class="note note-big n-b4"><span>Entre 8 a 30 caracterres alfanuméricos, con:</span><span>-Mayusculas</span><span>-Minusculas</span><span>-Caracteres especiales</span></div>

    <div class="note n-c1"><span>String de maximo 35 caracteres</span></div>
    <div class="note note-thin n-c2"><span>Cuenta de correo electronico activa y no</span><span>registrada en la base de datos.</span></div>
    <div class="note note-big n-c3"><span>Entre 8 a 30 caracterres alfanuméricos, con:</span><span>-Mayusculas</span><span>-Minusculas</span><span>-Caracteres especiales</span></div>
    <div class="note note-wide n-c4"><span>Cuenta de correo electronico activa</span></div>

    <div class="note n-d1"><span>String de maximo 35 caracteres</span></div>
    <div class="note note-thin n-d2"><span>Cuenta de correo electronico activa y no</span><span>registrada en la base de datos.</span></div>
    <div class="note note-big n-d3"><span>Entre 8 a 30 caracterres alfanuméricos, con:</span><span>-Mayusculas</span><span>-Minusculas</span><span>-Caracteres especiales</span></div>
    <div class="note n-d4"><span>Datos posibles:</span><span>-"Supervisor"</span><span>-"Almacenista"</span><span>-"Administrador"</span><span>-"Cajero"</span></div>
    <div class="note note-num n-d5"><span>Número de maximo |0 digitos que no</span><span>empiece con 0 y sin puntos</span><span>decimales.</span></div>
    <div class="note n-d6"><span>String de maximo 50 caracteres.</span></div>
    <div class="note n-d7"><span>Dato fecha</span></div>

    <div class="note note-big n-extra"><span>Entre 8 a 30 caracterres alfanuméricos, con:</span><span>-Mayusculas</span><span>-Minusculas</span><span>-Caracteres especiales</span></div>
</div>
</body>
</html>
```

FILE: styles.css
```css
html, body {
    margin: 0;
    background: #fff;
    overflow: hidden;
}
.sprites {
    position: absolute;
    width: 0;
    height: 0;
}
.logo-word {
    font-family: Lato, sans-serif;
    font-size: 72px;
    font-weight: 300;
    fill: #f4ee1f;
}
.logo-place {
    font-family: "Liberation Mono", monospace;
    font-size: 16px;
    fill: #2fae48;
}
.tray-help {
    font-family: "Liberation Sans", sans-serif;
    font-size: 14px;
    font-weight: bold;
}
.canvas {
    position: relative;
    width: 3796px;
    height: 2844px;
    overflow: hidden;
}

/* cada captura es una ventana sobre el lienzo */
.win {
    position: absolute;
    display: flex;
    flex-direction: column;
    overflow: hidden;
}
.win-a {
    left: 0;
    top: 0;
    width: 1921px;
    height: 1080px;
}
.win-b {
    left: 1925px;
    top: 0;
    width: 1867px;
    height: 1080px;
}
.win-b .site, .win-b .page {
    width: 1921px;
    flex-shrink: 0;
}
.win-b .page {
    flex-shrink: 1;
}
.win-c {
    left: 12px;
    top: 1100px;
    width: 1873px;
    height: 1294px;
}
.win-c .chrome {
    width: 1852px;
}
.win-d {
    left: 1864px;
    top: 1096px;
    width: 1932px;
    height: 1294px;
}

/* barra del navegador */
.chrome {
    flex: none;
    font-family: "Liberation Sans", sans-serif;
    color: #3c4043;
}
.tabs {
    display: flex;
    align-items: stretch;
    height: 33px;
    padding-left: 8px;
    background: #dee1e6;
    font-size: 12px;
}
.tab {
    display: flex;
    align-items: center;
    gap: 7px;
    flex: none;
    box-sizing: border-box;
    width: 169px;
    padding: 0 8px 0 10px;
    white-space: nowrap;
}
.win-b .tab {
    width: 141px;
}
.win-c .tab, .win-d .tab {
    width: 188px;
}
.tab-on {
    background: #fff;
    border-radius: 10px 10px 0 0;
}
.tab-name {
    flex: 1;
    overflow: hidden;
}
.tab-x {
    font-size: 16px;
}
.tab-add {
    align-self: center;
    margin-left: 10px;
    font-size: 20px;
}
.win-btns {
    display: flex;
    gap: 28px;
    align-items: center;
    margin-left: auto;
    padding-right: 18px;
    font-size: 17px;
}
.fav {
    flex: none;
    width: 16px;
    height: 16px;
}
.tool {
    display: flex;
    align-items: center;
    gap: 12px;
    height: 35px;
    padding: 0 14px 0 12px;
    background: #fff;
}
.tool-ic {
    flex: none;
    width: 17px;
    height: 17px;
}
.tool-ext {
    flex: none;
    width: 16px;
    height: 20px;
    margin-left: 4px;
}
.tool-ext + .tool-ext {
    margin-left: 16px;
}
.tool-ext + .tool-ic {
    margin-left: 5px;
}
.omni {
    display: flex;
    align-items: center;
    gap: 14px;
    flex: 1;
    height: 28px;
    padding: 0 14px 0 8px;
    background: #f1f3f4;
    border-radius: 14px;
}
.url {
    flex: 1;
    overflow: hidden;
    white-space: nowrap;
    font-size: 13px;
    color: #5f6368;
}
.url b {
    font-weight: normal;
    color: #202124;
}
.marks {
    display: flex;
    align-items: center;
    gap: 18px;
    box-sizing: border-box;
    height: 34px;
    padding: 0 12px 0 14px;
    background: #fff;
    border-bottom: 2px solid #dadce0;
    font-size: 12px;
    white-space: nowrap;
}
.mark {
    display: flex;
    align-items: center;
    gap: 6px;
}

/* pagina coortiendas */
.site {
    flex: none;
    display: flex;
    align-items: center;
    height: 129px;
    padding-left: 222px;
    background: #fff10d;
    font-family: Lato, sans-serif;
}
.site-logo {
    flex: none;
    align-self: flex-start;
    margin-top: 10px;
    width: 278px;
    height: 107px;
}
.site-nav {
    display: flex;
    gap: 82px;
    margin-left: 636px;
    margin-top: 16px;
    font-size: 25px;
    letter-spacing: 1.4px;
    color: #111;
}
.site-small {
    height: 107px;
    padding-left: 346px;
}
.site-small .site-logo {
    margin-top: 8px;
    width: 232px;
    height: 89px;
}
.site-small .site-nav {
    gap: 68px;
    margin-left: 532px;
    margin-top: 20px;
    font-size: 21px;
    letter-spacing: 1.2px;
}
.win-d .site-small {
    padding-left: 344px;
}
.win-d .site-small .site-nav {
    margin-left: 533px;
}
.page {
    flex: 1;
    min-height: 0;
    display: flex;
    justify-content: center;
    padding-top: 142px;
    background: #fefff8;
    font-family: Lato, sans-serif;
}
.win-c .page {
    width: 1920px;
    flex-shrink: 0;
}
.win-d .page {
    width: 1936px;
    flex-shrink: 0;
}
.win-d .chrome {
    width: 1932px;
}
.page-small {
    padding-top: 63px;
}
.form {
    display: flex;
    flex-direction: column;
    width: 741px;
    background: #fffffe;
    border-radius: 16px;
}
.page-small .form {
    width: 580px;
}
.form-title {
    margin: 0;
    text-align: center;
    font-size: 64px;
    font-weight: 400;
    letter-spacing: 4.4px;
    line-height: 76px;
    color: #1a2538;
}
.kind {
    display: flex;
    flex-direction: column;
    margin-top: 14px;
    padding-left: 10px;
    font-size: 33px;
    font-weight: 300;
    letter-spacing: 1.8px;
    line-height: 33px;
    color: #111;
}
.kind p {
    margin: 0;
}
.kind label {
    display: flex;
    align-items: center;
    gap: 11px;
}
.kind input {
    flex: none;
    width: 18px;
    height: 18px;
    margin: 0;
}
.row {
    display: flex;
    align-items: center;
    height: 50px;
}
.row-first {
    margin-top: 10px;
}
.row-pass {
    margin-top: 14px;
    margin-bottom: 8px;
}
.row-id {
    height: 28px;
    margin-top: 36px;
}
.row-cargo {
    height: 44px;
    margin-top: 11px;
}
.row-mail {
    margin-top: 15px;
}
.row-pass2 {
    margin-top: 11px;
    margin-bottom: 8px;
}
.ic {
    flex: none;
    fill: #000;
}
.ic-mail {
    width: 24px;
    height: 18px;
}
.ic-key {
    width: 24px;
    height: 24px;
}
.ic-user {
    width: 20px;
    height: 23px;
}
.field {
    flex: 1;
    min-width: 0;
    margin-left: 22px;
    padding: 0;
    border: 0;
    outline: 0;
    background: transparent;
    font-family: Lato, sans-serif;
    font-size: 36px;
    font-weight: 300;
}
.ic-user + .field {
    margin-left: 26px;
}
.field::placeholder {
    color: #666;
}
.box-input {
    box-sizing: border-box;
    margin-left: 7px;
    padding: 0 2px;
    border: 1px solid #767676;
    border-radius: 2px;
    background: #fff;
    font-family: Lato, sans-serif;
    font-size: 22px;
    color: #111;
}
.box-input::placeholder {
    color: #777;
}
.box-id {
    width: 245px;
    height: 28px;
}
.pick {
    flex: 1;
    margin-left: 26px;
    padding: 0;
    border: 0;
    outline: 0;
    background: transparent;
    font-family: Lato, sans-serif;
    font-size: 36px;
    font-weight: 300;
    color: #111;
    max-width: 582px;
}
.send {
    flex: none;
    height: 63px;
    border: 0;
    border-radius: 8px;
    background: #1a2638;
    color: #fff;
    font-family: Lato, sans-serif;
    font-size: 34px;
    font-weight: 300;
    letter-spacing: 1px;
}
.alt {
    margin: 50px 0 0;
    text-align: center;
    font-size: 26px;
    font-weight: 300;
    letter-spacing: 1.3px;
    line-height: 34px;
    color: #222;
}
.alt b {
    font-weight: 700;
}

/* version mas pequena de la pagina: formularios de registro */
.page-small .form-title {
    font-size: 54px;
    letter-spacing: 2.4px;
    line-height: 60px;
}
.page-small .kind {
    margin-top: 29px;
    padding-left: 9px;
    font-size: 28px;
    letter-spacing: 1.4px;
    line-height: 28px;
}
.page-small .kind input {
    width: 16px;
    height: 16px;
}
.page-small .kind label {
    gap: 8px;
}
.page-small .row {
    height: 44px;
}
.page-small .row-name {
    margin-top: 33px;
}
.page-small .row-mail {
    margin-top: 8px;
}
.page-small .row-pass2 {
    margin-top: 9px;
    margin-bottom: 5px;
}
.page-small .field {
    font-size: 30px;
}
.page-small .ic-user + .field {
    margin-left: 19px;
}
.page-small .ic-mail + .field, .page-small .ic-key + .field {
    margin-left: 19px;
}
.page-small .ic-mail, .page-small .ic-key {
    width: 20px;
    height: 18px;
}
.page-small .ic-user {
    width: 18px;
    height: 21px;
}
.page-small .pick {
    margin-left: 24px;
    font-size: 28px;
    max-width: 452px;
}
.page-small .send {
    height: 53px;
    font-size: 28px;
}
.page-small .alt {
    margin-top: 44px;
    font-size: 22px;
    letter-spacing: 1.1px;
    line-height: 28px;
}
.win-d .page-small .row {
    margin-left: -8px;
}
.win-d .page-small .row-pass2 {
    margin-bottom: 0;
}
.win-d .page-small .row-mail {
    margin-top: 9px;
}
.win-d .page-small .row-name {
    margin-top: 31px;
}
.win-d .page-small .kind {
    margin-top: 30px;
    padding-left: 0;
}
.page-small .row-doc {
    height: 24px;
    margin-top: 3px;
}
.page-small .row-num {
    height: 24px;
}
.page-small .row-desc {
    margin-top: 5px;
}
.page-small .row-date {
    height: 29px;
    margin-top: 5px;
}
.page-small .box-input {
    margin-left: 6px;
    font-size: 18px;
}
.box-doc {
    width: 252px;
    height: 24px;
}
.box-num {
    width: 200px;
    height: 24px;
}
.box-date {
    display: flex;
    align-items: center;
    justify-content: space-between;
    width: 199px;
    height: 29px;
    padding-right: 6px;
}
.cal {
    width: 14px;
    height: 16px;
}
.send-far {
    margin-top: 65px;
}
.page-small .alt-near {
    margin-top: 9px;
}

/* descargas y barra de tareas */
.dock {
    flex: none;
    width: 1921px;
    font-family: "Liberation Sans", sans-serif;
}
.win-c .dock {
    margin-left: 20px;
}
.win-d .dock {
    margin-left: 21px;
}
.dl {
    display: flex;
    align-items: center;
    box-sizing: border-box;
    height: 56px;
    padding-left: 3px;
    background: #fff;
    border-top: 2px solid #e3e3e3;
    font-size: 12px;
    color: #333;
}
.win-d .dl {
    width: 1911px;
}
.dl-item {
    display: flex;
    align-items: center;
    box-sizing: border-box;
    width: 233px;
    height: 48px;
    padding: 0 14px 0 16px;
    border-right: 1px solid #dcdcdc;
}
.dl-ic {
    flex: none;
    width: 16px;
    height: 22px;
}
.dl-txt {
    display: flex;
    flex-direction: column;
    gap: 7px;
    flex: 1;
    margin-left: 12px;
    white-space: nowrap;
}
.dl-txt small {
    font-size: 9px;
}
.dl-txt i {
    font-style: normal;
    font-size: 12px;
    color: #0f9d58;
}
.dl-up {
    font-size: 14px;
    color: #555;
}
.dl-all {
    margin-left: auto;
    padding: 12px 8px;
    border: 1px solid #dcdcdc;
    border-radius: 4px;
    font-size: 11px;
    color: #0a9d58;
    white-space: nowrap;
}
.dl-x {
    margin: 0 14px 0 24px;
    font-size: 18px;
    color: #555;
}
.bar {
    display: flex;
    align-items: stretch;
    height: 40px;
    color: #fff;
}
.bar-a {
    background: linear-gradient(90deg, #333 20%, #3a3630 55%, #1c2330 72%, #1b2230);
}
.bar-b {
    background: #222;
}
.bar-c {
    background: #404040;
}
.start {
    display: flex;
    align-items: center;
    justify-content: center;
    flex: none;
    width: 48px;
    background: rgba(0, 0, 0, 0.25);
}
.bar-a .start {
    background: #1e2e1c;
}
.bar-win {
    width: 20px;
    height: 20px;
}
.find {
    display: flex;
    align-items: center;
    flex: none;
    gap: 9px;
    box-sizing: border-box;
    width: 344px;
    padding-left: 10px;
    background: #f0f0f0;
    font-size: 14px;
    color: #333;
}
.find-ic {
    width: 20px;
    height: 20px;
}
.app {
    display: flex;
    align-items: center;
    justify-content: center;
    flex: none;
    box-sizing: border-box;
    width: 49px;
}
.app svg {
    width: 26px;
    height: 26px;
}
.app-run {
    border-bottom: 3px solid #76b9ed;
}
.app-cur {
    background: #666;
}
.tray {
    display: flex;
    align-items: center;
    gap: 11px;
    margin-left: auto;
    padding-right: 19px;
}
.tray-tall {
    width: 16px;
    height: 24px;
}
.tray-ic {
    width: 16px;
    height: 16px;
}
.tray-lang {
    font-size: 11px;
}
.clock {
    min-width: 59px;
    margin-right: 14px;
    text-align: right;
    font-size: 11px;
    line-height: 18px;
    white-space: nowrap;
}

/* flechas verdes */
.pointers {
    position: absolute;
    left: 0;
    top: 0;
    width: 3796px;
    height: 2844px;
    fill: none;
    stroke: #22b14c;
    stroke-width: 4;
}

/* cuadros de anotacion */
.note {
    position: absolute;
    display: flex;
    flex-direction: column;
    justify-content: center;
    box-sizing: border-box;
    padding: 0 6px;
    border: 4px solid #22b14c;
    font-family: Roboto, sans-serif;
    font-size: 22px;
    line-height: 25px;
    color: #ed1c24;
    white-space: nowrap;
}
.note-big {
    font-size: 22.800px;
    line-height: 30px;
}
.note-num {
    font-size: 20.500px;
}
.note-wide {
    font-size: 23px;
}
.note-thin {
    font-size: 21px;
    line-height: 30px;
    font-weight: 300;
}
.n-empty { left: 1173px; top: 492px; width: 396px; height: 40px; }
.n-b1 { left: 3284px; top: 409px; width: 361px; height: 87px; }
.n-b2 { left: 3284px; top: 502px; width: 181px; height: 143px; }
.n-b3 { left: 3284px; top: 649px; width: 396px; height: 40px; padding-left: 12px; }
.n-b4 { left: 3284px; top: 697px; width: 468px; height: 126px; }
.n-c1 { left: 1272px; top: 1487px; width: 342px; height: 31px; padding-left: 2px; }
.n-c2 { left: 1272px; top: 1523px; width: 393px; height: 64px; padding-left: 2px; }
.n-c3 { left: 1272px; top: 1593px; width: 467px; height: 128px; }
.n-c4 { left: 675px; top: 1965px; width: 381px; height: 34px; }
.n-d1 { left: 3302px; top: 1437px; width: 340px; height: 30px; padding-left: 2px; }
.n-d2 { left: 3302px; top: 1473px; width: 391px; height: 64px; padding-left: 2px; }
.n-d3 { left: 3302px; top: 1543px; width: 465px; height: 127px; }
.n-d4 { left: 3302px; top: 1677px; width: 183px; height: 142px; padding-left: 8px; }
.n-d5 { left: 3305px; top: 1824px; width: 362px; height: 87px; padding-left: 6px; }
.n-d6 { left: 3306px; top: 1920px; width: 341px; height: 36px; padding-left: 3px; }
.n-d7 { left: 3308px; top: 1961px; width: 126px; height: 30px; }
.n-extra {
    left: 3114px;
    top: 2471px;
    width: 469px;
    height: 127px;
    background: #fefff8;
    box-shadow: 0 0 0 18px #fefff8;
}
```
